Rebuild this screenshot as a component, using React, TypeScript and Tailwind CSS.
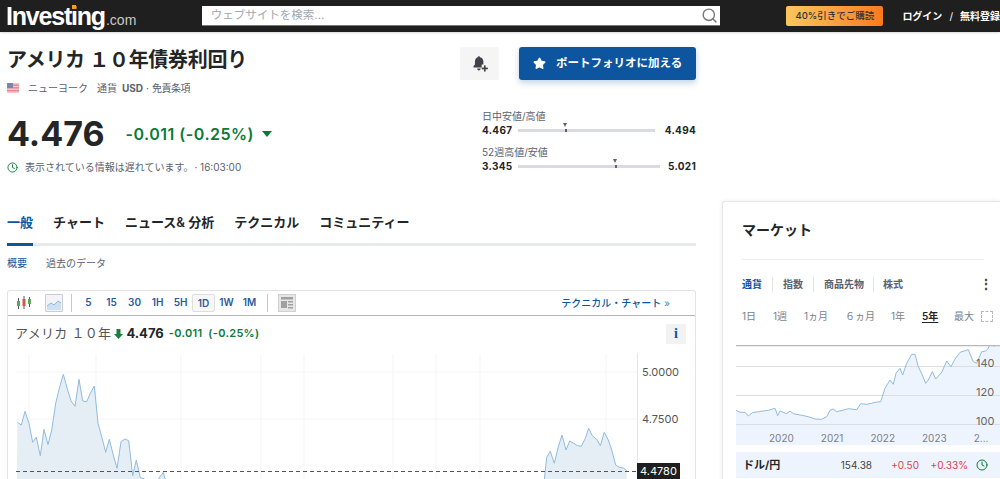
import { Clock, Search, Star } from "lucide-react";

const FONT = "font-['Inter','Noto_Sans_CJK_JP',sans-serif]";

const leftLine = [[52,247],[64,255],[75,214],[87,250],[98,307],[109,292],[121,347],[132,268],[144,314],[155,270],[167,190],[178,145],[190,103],[202,146],[213,183],[225,199],[237,118],[248,183],[260,185],[271,160],[283,138],[294,250],[305,290],[317,337],[328,298],[340,345],[351,385],[363,305],[375,297],[386,302],[398,407],[409,360],[421,413],[433,416],[445,440],[460,440],[475,417],[490,397],[497,425]];
const rightLine = [[583,600],[590,532],[601,514],[613,550],[625,500],[636,465],[648,510],[659,483],[671,490],[683,497],[694,499],[706,475],[716,445],[727,467],[740,478],[751,497],[763,457],[775,480],[785,510],[797,555],[808,562],[820,564],[830,572],[830,600]];
const marketLine = [[63,226],[75,232],[90,232],[100,243],[112,233],[130,230],[160,226],[180,220],[188,242],[195,228],[215,236],[225,228],[235,236],[260,241],[280,245],[300,252],[320,253],[335,245],[345,226],[355,222],[365,230],[390,224],[400,221],[425,224],[437,206],[455,208],[470,205],[480,202],[497,200],[510,160],[525,135],[535,148],[543,115],[555,100],[563,120],[575,85],[590,58],[600,58],[610,95],[622,120],[632,145],[640,135],[652,110],[662,132],[680,112],[695,78],[708,95],[720,72],[735,52],[760,44],[775,80],[785,85],[800,50],[812,48],[820,40],[830,13],[838,35]];

// zoom crops were 3x, so convert back to page coordinates
const toPage = (pts: number[][], ox: number, oy: number) =>
  pts.map(([x, y]) => `${(x / 3 + ox).toFixed(1)},${(y / 3 + oy).toFixed(1)}`).join(" ");

function BellPlus() {
  return (
    <svg width="18" height="18" viewBox="0 0 16 16" fill="#3f4349">
      <path d="M7 1c.6 0 1 .4 1 1 2 .5 3 2 3 4v2.500H9.500V11H2.200v-1L3.500 8.500V6c0-2 1-3.500 2.500-4 0-.6.400-1 1-1z" />
      <path d="M5.500 12h3c0 1-.6 1.700-1.500 1.700S5.500 13 5.500 12z" />
      <rect x="9.500" y="11.200" width="5.500" height="1.500" />
      <rect x="11.500" y="9.200" width="1.500" height="5.500" />
    </svg>
  );
}

function UsFlag() {
  return (
    <svg width="12" height="10" viewBox="0 0 12 10">
      <rect width="12" height="10" fill="#f3c9cb" />
      <rect y="1.500" width="12" height="1.300" fill="#e0828a" />
      <rect y="4.200" width="12" height="1.300" fill="#e0828a" />
      <rect y="7" width="12" height="1.300" fill="#e0828a" />
      <rect width="6" height="5" fill="#7d84ad" />
    </svg>
  );
}

function RangeBar({ label, low, high, pos, barWidth }: { label: string; low: string; high: string; pos: number; barWidth: string }) {
  return (
    <div className="h-[36px]">
      <div className="text-[10px] leading-[14px] text-[#5b616e]">{label}</div>
      <div className="flex items-center text-[10px] leading-[14px] font-bold text-[#232526] tracking-[0.3px]">
        <span className="w-[36px]">{low}</span>
        <div className={`relative h-[3px] bg-[#d9dbe0] ${barWidth}`}>
          <div className="absolute top-[-6px] w-0 h-0 border-x-[2.5px] border-x-transparent border-t-[4px] border-t-[#5b616e]" style={{ left: pos }} />
          <div className="absolute top-0 w-[2px] h-[3px] bg-[#5b616e]" style={{ left: pos + 1.5 }} />
        </div>
        <span className="ml-auto">{high}</span>
      </div>
    </div>
  );
}

function CandleIcon() {
  return (
    <svg width="16" height="14" viewBox="0 0 16 14">
      <path d="M2.500 2v11M8 0v13M13.500 1v10" stroke="#555" strokeWidth="1" />
      <rect x="1" y="5" width="3" height="5" fill="#5aa85a" />
      <rect x="6.500" y="3" width="3" height="7" fill="#d9534f" />
      <rect x="12" y="3" width="3" height="5" fill="#5aa85a" />
    </svg>
  );
}

function AreaIcon() {
  return (
    <div className="w-[18px] h-[18px] border border-[#c8cdd3] bg-[#f2f4f7] rounded-[1px]">
      <svg width="16" height="16" viewBox="0 0 16 16">
        <path d="M1 11l4-3 3 2 4-4 3 2v7H1z" fill="#cfe0f0" />
        <path d="M1 11l4-3 3 2 4-4 3 2" fill="none" stroke="#8eb6d8" strokeWidth="1" />
      </svg>
    </div>
  );
}

function LayoutIcon() {
  return (
    <div className="w-[18px] h-[18px] border border-[#d0d0d0] bg-[#e6e6e6] flex items-center justify-center">
      <svg width="14" height="14" viewBox="0 0 14 14" fill="#a0a0a0">
        <rect x="1" y="1" width="12" height="2.500" />
        <rect x="1" y="5" width="6" height="7" />
        <rect x="8" y="5" width="5" height="1.500" />
        <rect x="8" y="8" width="5" height="1.500" />
        <rect x="8" y="11" width="5" height="1.500" />
      </svg>
    </div>
  );
}

function MainChart() {
  return (
    <div className="relative h-[128px]">
      <svg width="687" height="128" viewBox="8 351 687 128" className="block">
        {[372, 419].map((y) => <line key={y} x1="16" x2="637" y1={y} y2={y} stroke="#f5f5f5" />)}
        {[29, 96, 181, 261, 304, 393, 436, 480, 606].map((x) => <line key={x} x1={x} x2={x} y1="354" y2="479" stroke="#f5f5f5" />)}
        <line x1="637.500" x2="637.500" y1="353" y2="479" stroke="#e6e6e6" />
        <polygon points={`${toPage(leftLine, 0, 340)} 166,479 17,479`} fill="#e5eef5" />
        <polyline points={toPage(leftLine, 0, 340)} fill="none" stroke="#8fbcdf" strokeWidth="1" />
        <polygon points={toPage(rightLine, 350, 280)} fill="#e5eef5" />
        <polyline points={toPage(rightLine.slice(0, -1), 350, 280)} fill="none" stroke="#8fbcdf" strokeWidth="1" />
        <line x1="16" x2="637" y1="471.500" y2="471.500" stroke="#555" strokeDasharray="4 3" />
      </svg>
      <span className="absolute left-[634px] top-[14px] text-[11px] leading-[14px] text-[#555]">5.0000</span>
      <span className="absolute left-[634px] top-[61px] text-[11px] leading-[14px] text-[#555]">4.7500</span>
      <span className="absolute left-[629px] top-[112px] h-[16px] px-[3px] bg-[#1f1f1f] text-white text-[11px] leading-[16px]">4.4780</span>
    </div>
  );
}

function MarketChart() {
  return (
    <div className="relative h-[100px] w-[264px] overflow-hidden">
      <svg width="264" height="100" viewBox="736 345 264 100" className="block">
        <rect x="736" y="345" width="264" height="100" fill="#eef4fd" />
        <polygon points={`${toPage(marketLine, 715, 335)} 994,345 736,345`} fill="#ffffff" />
        <line x1="736" x2="1000" y1="345.500" y2="345.500" stroke="#b8b8b8" strokeWidth="1.500" />
        {[366.5, 395.5, 424.5].map((y) => <line key={y} x1="736" x2="1000" y1={y} y2={y} stroke="#dadde2" />)}
        <polyline points={toPage(marketLine, 715, 335)} fill="none" stroke="#8fbcdf" strokeWidth="1" />
      </svg>
      <span className="absolute left-[240px] top-[11px] text-[11px] leading-[14px] text-[#666]">140</span>
      <span className="absolute left-[240px] top-[40px] text-[11px] leading-[14px] text-[#666]">120</span>
      <span className="absolute left-[240px] top-[69px] text-[11px] leading-[14px] text-[#666]">100</span>
      <div className="absolute left-[33px] top-[86px] flex gap-[27px] text-[10px] leading-[14px] text-[#7a7f88]">
        <span>2020</span>
        <span>2021</span>
        <span>2022</span>
        <span>2023</span>
        <span>2...</span>
      </div>
    </div>
  );
}

export default function App() {
  return (
    <div className={`${FONT} w-[1000px] h-[479px] overflow-hidden bg-white text-[#232526]`}>
      <header className="h-[32px] bg-[#1f1f1f] flex items-center shadow-[0_1px_2px_rgba(0,0,0,0.15)] whitespace-nowrap">
        <div className="w-[202px] pl-[6px] flex items-baseline font-['Liberation_Sans',sans-serif]">
          <span className="relative text-[25px] leading-[30px] font-bold tracking-[-1.2px] text-white">
            Investing
            <span className="absolute left-[66px] top-[4px] w-[4px] h-[4px] bg-[#f59e1b]" />
          </span>
          <span className="text-[14px] text-[#c9c9c9] ml-[1px]">.com</span>
        </div>
        <div className="w-[519px] h-[20px] bg-white flex items-center justify-between pl-[9px] pr-[2px] border-b border-[#777]">
          <span className="text-[11.5px] text-[#a3a7ae]">ウェブサイトを検索...</span>
          <Search size={17} className="text-[#777]" />
        </div>
        <button className="ml-[66px] w-[97px] h-[20px] rounded-[2px] bg-gradient-to-r from-[#fbc65c] to-[#f97a1f] text-[9.5px] font-medium text-[#333]">
          40%引きでご購読
        </button>
        <span className="ml-[19px] text-[10px] font-bold text-white">ログイン</span>
        <span className="mx-[7px] text-[10px] text-white">/</span>
        <span className="text-[10px] font-bold text-white">無料登録</span>
      </header>

      <div className="flex pl-[7px] pt-[15px] items-start">
        <main className="w-[689px] shrink-0">
          <div className="flex h-[127px]">
            <div className="w-[453px]">
              <h1 className="mt-[1px] h-[25px] text-[20px] leading-[25px] font-bold whitespace-nowrap tracking-[-0.3px]">アメリカ １０年債券利回り</h1>
              <div className="mt-[7px] h-[16px] flex items-center text-[10px] text-[#5b616e] whitespace-nowrap">
                <UsFlag />
                <span className="ml-[9px]">ニューヨーク</span>
                <span className="ml-[9px]">通貨</span>
                <span className="ml-[5px] font-bold">USD</span>
                <span className="ml-[3px]">·</span>
                <span className="ml-[3px] tracking-[-0.5px]">免責条項</span>
              </div>
              <div className="mt-[17px] flex items-center h-[42px]">
                <span className="text-[34px] leading-[42px] font-bold">4.476</span>
                <span className="ml-[21px] text-[16px] font-semibold text-[#0a7a3b] tracking-[0.5px]">-0.011 (-0.25%)</span>
                <span className="ml-[8px] w-0 h-0 border-x-[5px] border-x-transparent border-t-[6px] border-t-[#0a7a3b]" />
              </div>
              <div className="mt-[5px] flex items-center text-[10px] text-[#5b616e] whitespace-nowrap">
                <Clock size={11} className="text-[#0a7a3b]" />
                <span className="ml-[7px]">表示されている情報は遅れています。</span>
                <span className="ml-[1px]">· 16:03:00</span>
              </div>
            </div>
            <div className="w-[236px]">
              <div className="flex">
                <button className="w-[39px] h-[33px] rounded-[2px] bg-[#f5f5f5] flex items-center justify-center"><BellPlus /></button>
                <button className="ml-[20px] w-[177px] h-[33px] rounded-[3px] bg-[#0d559e] text-white text-[11.5px] font-bold flex items-center pl-[14px] shadow-[0_3px_6px_rgba(13,85,158,0.25)]">
                  <Star size={13} fill="white" />
                  <span className="ml-[10px]">ポートフォリオに加える</span>
                </button>
              </div>
              <div className="ml-[22px] mt-[29px]">
                <RangeBar label="日中安値/高値" low="4.467" high="4.494" pos={45} barWidth="w-[137px]" />
                <RangeBar label="52週高値/安値" low="3.345" high="5.021" pos={95} barWidth="w-[142px]" />
              </div>
            </div>
          </div>

          <nav className="mt-[36px] h-[36px] border-b-[3px] border-[#e6e9ee] flex gap-[20px] text-[13px] font-semibold whitespace-nowrap">
            <span className="relative h-[36px] leading-[24px] text-[#0d559e] after:absolute after:left-0 after:right-0 after:bottom-0 after:h-[3px] after:bg-[#0d559e]">一般</span>
            <span className="leading-[24px]">チャート</span>
            <span className="leading-[24px]">ニュース&amp; 分析</span>
            <span className="leading-[24px]">テクニカル</span>
            <span className="leading-[24px]">コミュニティー</span>
          </nav>
          <div className="mt-[9px] flex gap-[19px] text-[10px] leading-[16px]">
            <span className="text-[#0d559e]">概要</span>
            <span className="text-[#5b616e]">過去のデータ</span>
          </div>

          <section className="mt-[19px] border border-[#e3e3e3] border-b-0 rounded-t-[3px]">
            <div className="h-[24px] box-content border-b border-[#b5b5b5] flex items-center pl-[8px] pr-[25px] whitespace-nowrap">
              <CandleIcon />
              <span className="ml-[13px]"><AreaIcon /></span>
              <span className="ml-[8px] w-px h-[18px] bg-[#c8c8c8]" />
              <div className="ml-[5px] flex items-center text-[10px] font-semibold text-[#2a5a9e]">
                {["5", "15", "30", "1H", "5H", "1D", "1W", "1M"].map((t) => (
                  <span key={t} className={`w-[23px] h-[18px] leading-[16px] text-center rounded-[2px] ${t === "1D" ? "border border-[#dedede] bg-[#f7f7f7]" : ""}`}>{t}</span>
                ))}
              </div>
              <span className="ml-[6px] w-px h-[18px] bg-[#c8c8c8]" />
              <span className="ml-[10px]"><LayoutIcon /></span>
              <span className="ml-auto text-[10px] font-medium text-[#0d559e]">テクニカル・チャート <span className="text-[#6d93c9]">»</span></span>
            </div>
            <div className="h-[35px] flex items-center pl-[7px] pr-[9px] whitespace-nowrap">
              <span className="text-[13px] text-[#555] tracking-[0.3px]">アメリカ １０年</span>
              <svg width="9" height="10" viewBox="0 0 9 10" className="ml-[3px]" fill="#1a7f3c"><path d="M2.500 0h4v5H9L4.500 10 0 5h2.500z" /></svg>
              <span className="ml-[3px] text-[13px] font-bold">4.476</span>
              <span className="ml-[5px] text-[11px] font-semibold text-[#0a7a3b] tracking-[0.3px]">-0.011</span>
              <span className="ml-[6px] text-[11px] font-semibold text-[#0a7a3b] tracking-[0.3px]">(-0.25%)</span>
              <span className="ml-auto w-[20px] h-[20px] bg-[#f2f2f2] text-center text-[14px] leading-[20px] font-bold text-[#0d559e] font-['Liberation_Serif',serif]">i</span>
            </div>
            <MainChart />
          </section>
        </main>

        <aside className="ml-[26px] mt-[154px] w-[278px] h-[300px] shrink-0 rounded-tl-[3px] border border-r-0 border-[#e6e6e6] shadow-[0_0_4px_rgba(0,0,0,0.08)] pl-[13px] whitespace-nowrap">
          <div className="ml-[6px] h-[58px] mr-[16px] border-b border-[#eeeeee] text-[14px] leading-[55px] font-semibold">マーケット</div>
          <div className="ml-[6px] mt-[17px] h-[14px] flex items-center text-[10px] font-semibold text-[#5b616e]">
            <span className="text-[#0d559e] pr-[10px] border-r border-[#e3e3e3]">通貨</span>
            <span className="px-[10px] border-r border-[#e3e3e3]">指数</span>
            <span className="pl-[10px] pr-[9px] border-r border-[#e3e3e3]">商品先物</span>
            <span className="pl-[9px]">株式</span>
            <span className="ml-[76px] text-[14px] leading-[14px] font-bold text-[#444]">⋮</span>
          </div>
          <div className="ml-[6px] mt-[17px] h-[16px] flex items-center text-[10px] text-[#7a7f88]">
            <span className="w-[31px]">1日</span>
            <span className="w-[31px]">1週</span>
            <span className="w-[41px]">1ヵ月</span>
            <span className="w-[46px]">６ヵ月</span>
            <span className="w-[31px]">1年</span>
            <span className="w-[32px] font-semibold text-[#232526] underline underline-offset-2">5年</span>
            <span className="w-[27px]">最大</span>
            <span className="w-[12px] h-[11px] border border-dashed border-[#b9b9b9]" />
          </div>
          <div className="mt-[21px]"><MarketChart /></div>
          <div className="mt-[7px] h-[26px] w-[264px] bg-[#eef4fd] flex items-center pl-[7px] text-[10px]">
            <span className="font-bold text-[11px] text-[#232526] w-[76px]">ドル/円</span>
            <span className="w-[53px] text-right text-[#444]">154.38</span>
            <span className="w-[47px] text-right text-[#d9434e]">+0.50</span>
            <span className="w-[49px] text-right text-[#d9434e]">+0.33%</span>
            <Clock size={12} className="ml-[8px] text-[#0a7a3b]" />
          </div>
        </aside>
      </div>
    </div>
  );
}
